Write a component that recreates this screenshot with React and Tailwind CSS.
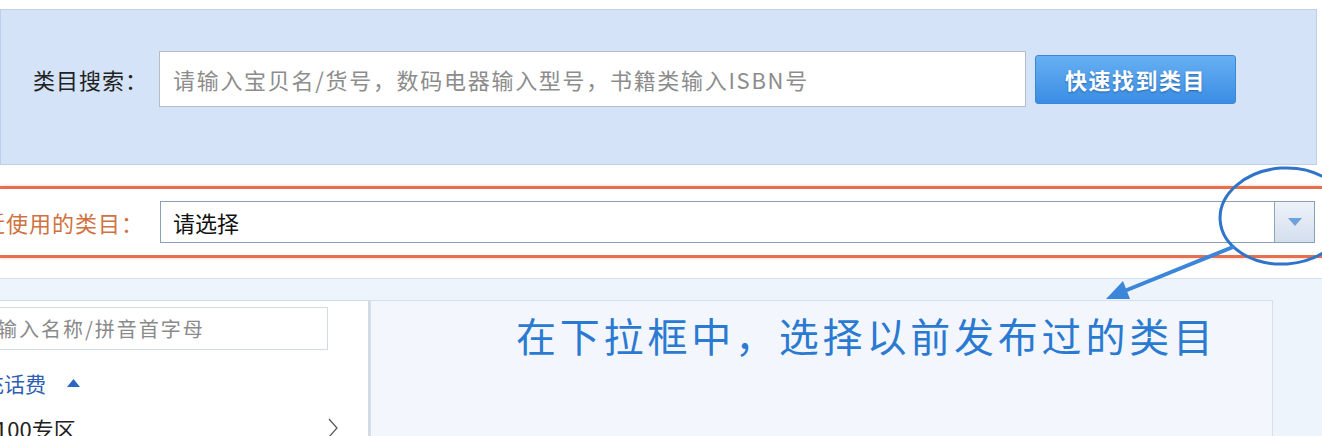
import React from 'react';

const CJK = "font-['Noto_Sans_CJK_SC','Noto_Sans',sans-serif]";

function Annotation() {
  // hand-drawn highlight: ellipse around the dropdown + arrow to the note
  return (
    <svg
      className="pointer-events-none absolute left-0 top-0"
      width="1322"
      height="436"
      viewBox="0 0 1322 436"
    >
      <ellipse
        cx="1284"
        cy="216"
        rx="64"
        ry="48"
        transform="rotate(-4 1284 216)"
        fill="none"
        stroke="#2f74c8"
        strokeWidth="3"
      />
      <line x1="1233" y1="247" x2="1122" y2="292" stroke="#3b86d9" strokeWidth="4" strokeLinecap="round" />
      <polygon points="1106,299 1130,299 1123,281" fill="#3b86d9" />
    </svg>
  );
}

export default function App() {
  return (
    <div className={`relative h-[436px] w-[1322px] overflow-hidden bg-white ${CJK}`}>
      {/* category search bar */}
      <div className="mt-[9px] mr-[5px] h-[156px] border border-[#bcd0ea] bg-[#d4e3f7]">
        <div className="flex items-start pt-[41px]">
          <span className="ml-[32px] mt-[12px] w-[126px] text-[22px] leading-[32px] tracking-[1px] text-[#222]">
            类目搜索：
          </span>
          <input
            className="h-[56px] w-[867px] border border-[#b7bdc6] bg-white pl-[13px] text-[22px] tracking-[1.7px] outline-none placeholder:text-[#8c8c8c]"
            placeholder="请输入宝贝名/货号，数码电器输入型号，书籍类输入ISBN号"
          />
          <button className="ml-[9px] mt-[4px] h-[49px] w-[201px] rounded-[3px] border border-[#3e86d3] bg-gradient-to-b from-[#66b0f3] to-[#3a8de4] text-[22px] font-bold tracking-[1.5px] text-white [text-shadow:0_1px_2px_rgba(0,40,90,0.45)]">
            快速找到类目
          </button>
        </div>
      </div>

      {/* recently used categories */}
      <div className="h-[114px] border-b border-[#d5e0ee] pt-[21px]">
        <div className="border-y-[3px] border-[#e6704e] py-[12px] shadow-[0_0_3px_rgba(230,112,78,0.4)]">
          <div className="flex items-center">
            <span className="-ml-[40px] w-[200px] text-[22px] tracking-[1px] text-[#cf7240]">
              最近使用的类目：
            </span>
            <div className="flex h-[42px] w-[1155px] items-stretch border border-[#8aa0b6] bg-white">
              <span className="flex-1 pl-[12px] text-[22px] leading-[40px] text-[#111]">请选择</span>
              <div className="flex w-[40px] items-center justify-center border-l border-[#8ea4bd] bg-gradient-to-b from-[#eef3fa] to-[#d3deed]">
                <svg width="14" height="8" viewBox="0 0 14 8">
                  <polygon points="0,0 14,0 7,8" fill="#6fa2dc" />
                </svg>
              </div>
            </div>
          </div>
        </div>
      </div>

      {/* category tree + note */}
      <div className="flex h-[157px] bg-[#eef4fb] pt-[21px]">
        <div className="w-[370px] border-r-2 border-t border-[#d2dae5] bg-white">
          <div className="pt-[6px]">
            <input
              className="-ml-[40px] h-[43px] w-[368px] border border-[#d3dbe6] bg-white pl-[14px] text-[20px] tracking-[2px] outline-none placeholder:text-[#8a8a8a]"
              placeholder="请输入名称/拼音首字母"
            />
          </div>
          <div className="-ml-[17px] mt-[20px] flex items-center text-[21px] leading-[26px] text-[#2f5fb3]">
            <span>充话费</span>
            <svg className="ml-[21px]" width="13" height="8" viewBox="0 0 13 8">
              <polygon points="6.5,0 13,8 0,8" fill="#2b66c2" />
            </svg>
          </div>
          <div className="mt-[18px] flex items-center justify-between pr-[30px]">
            <span className="-ml-[5px] text-[22px] leading-[28px] text-[#222]">100专区</span>
            <svg width="10" height="20" viewBox="0 0 10 20">
              <polyline points="1,1 9,10 1,19" fill="none" stroke="#555" strokeWidth="1.2" />
            </svg>
          </div>
        </div>
        <div className="w-[903px] border border-b-0 border-[#d6e0ec] bg-[#f3f7fd] pl-[145px] pt-[10px]">
          <p className="text-[40px] leading-[48px] tracking-[3.8px] text-[#2b7ad2]">
            在下拉框中，选择以前发布过的类目
          </p>
        </div>
      </div>

      <Annotation />
    </div>
  );
}
